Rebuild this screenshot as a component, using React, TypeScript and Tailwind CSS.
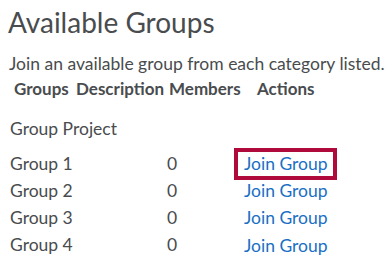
const groups = ["Group 1", "Group 2", "Group 3", "Group 4"];

export default function App() {
  return (
    <div className="h-[265px] w-[392px] overflow-hidden bg-white font-['Lato',sans-serif] text-[#494c4e]">
      <h1 className="pl-[8px] pt-[4px] text-[28px] leading-[36px]">Available Groups</h1>
      <p className="mt-[13px] pl-[9px] text-[17.5px] leading-[22px]">
        Join an available group from each category listed.
      </p>
      <div className="mt-[3px] flex pl-[14px] text-[17px] font-bold leading-[22px]">
        <span className="w-[62px]">Groups</span>
        <span className="w-[93px]">Description</span>
        <span className="w-[88px]">Members</span>
        <span>Actions</span>
      </div>
      <div className="mt-[18px] pl-[10px] text-[17.5px] leading-[22px]">Group Project</div>
      <div className="mt-[10px]">
        {groups.map((g, i) => (
          <div key={g} className="flex h-[27.3px] items-center pl-[10px] text-[17.5px]">
            <span className="w-[157px]">{g}</span>
            <span className="w-[67px]">0</span>
            <span
              className={
                i === 0
                  ? "border-[4px] border-[#b0093c] py-[1px] pl-[6px] pr-[5px] leading-[22px] text-[#1a6fc4]"
                  : "border-[4px] border-transparent py-[1px] pl-[6px] pr-[5px] leading-[22px] text-[#1a6fc4]"
              }
            >
              Join Group
            </span>
          </div>
        ))}
      </div>
    </div>
  );
}
